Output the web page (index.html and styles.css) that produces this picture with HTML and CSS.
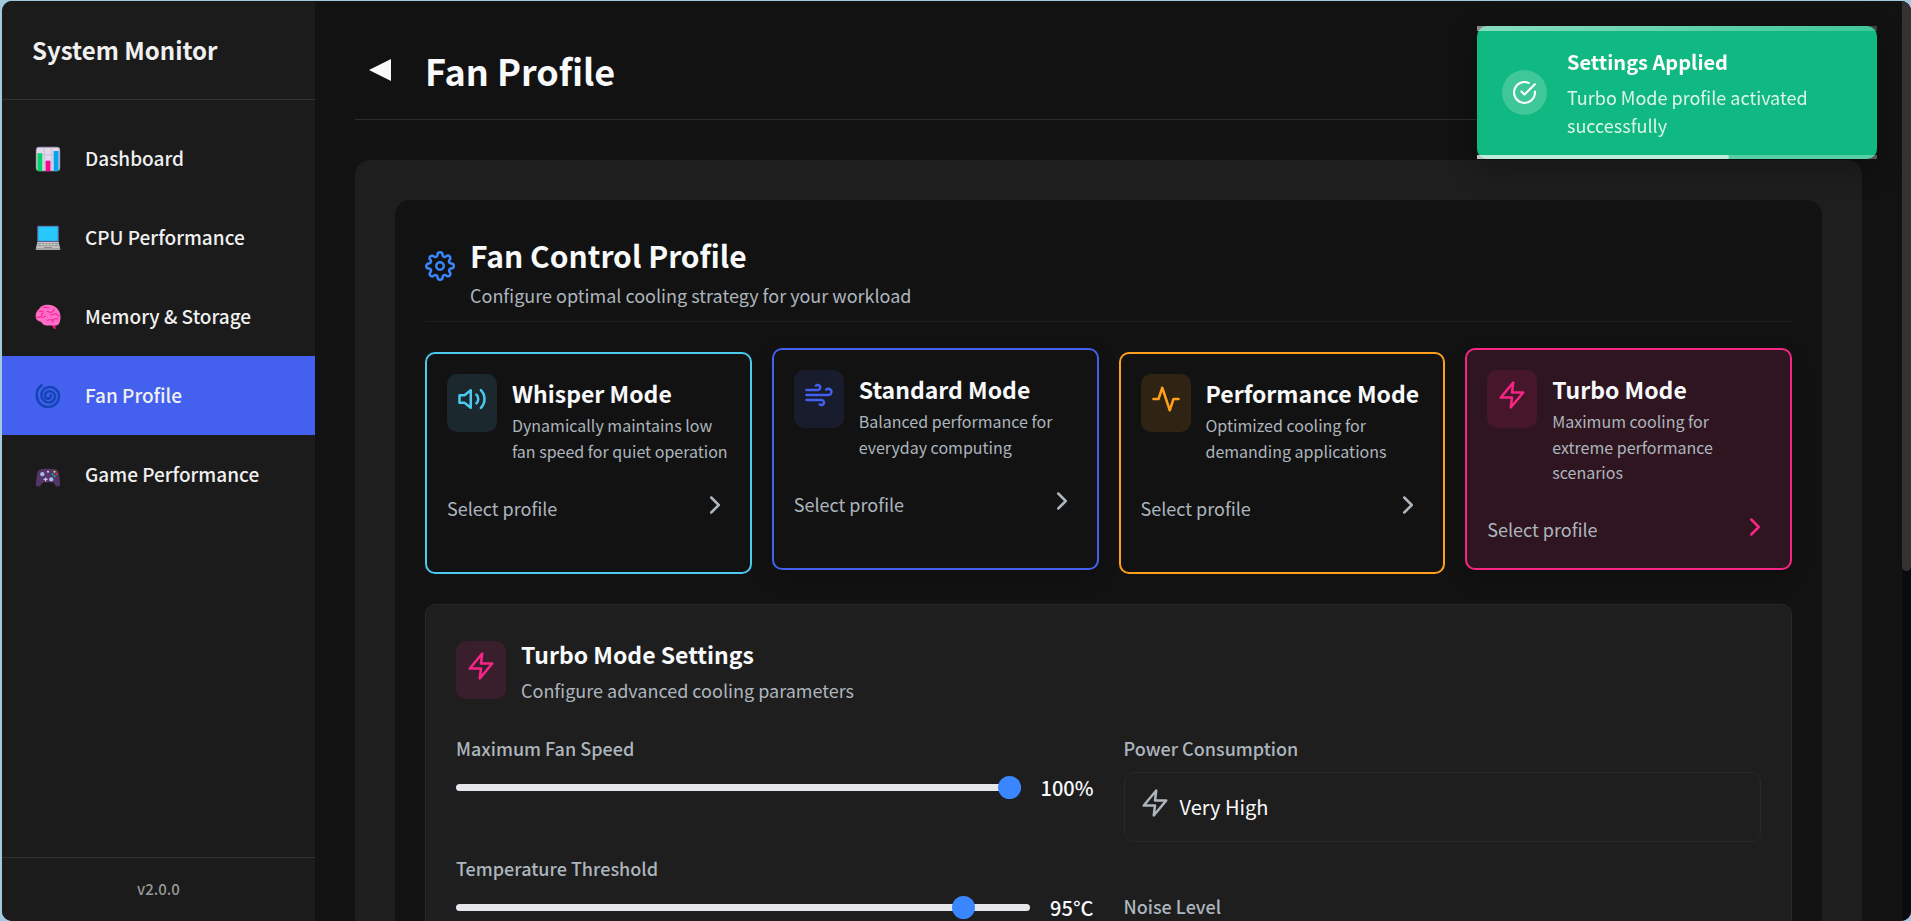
FILE: index.html
```html
<!DOCTYPE html>
<html lang="en">
<head>
<meta charset="utf-8">
<title>System Monitor</title>
<link rel="stylesheet" href="styles.css">
</head>
<body>
<svg class="defs" aria-hidden="true">
  <symbol id="zap" viewBox="0 0 24 24"><polygon points="13 2 3 14 12 14 11 22 21 10 12 10 13 2"/></symbol>
  <symbol id="chevron" viewBox="0 0 24 24"><polyline points="9 18 15 12 9 6"/></symbol>
</svg>
<div class="window">
  <aside class="sidebar">
    <div class="brand">System Monitor</div>
    <nav class="nav">
      <a class="nav-item" href="#dashboard">
        <svg class="emoji" viewBox="0 0 32 32"><rect x="1" y="1" width="30" height="30" rx="4" fill="#998ea4"/><rect x="2" y="2" width="28" height="28" rx="3" fill="#e1d8ec"/><path d="M11.500 2v28M20.500 2v28M2 11h28M2 21h28" stroke="#cdc4d6" stroke-width="1.500"/><path d="M3 9h6v22H5a2 2 0 0 1-2-2z" fill="#00d26a"/><path d="M13 18h6v13h-6z" fill="#f8088e"/><path d="M23 6h6v23a2 2 0 0 1-2 2h-4z" fill="#00a6ed"/></svg>
        <span>Dashboard</span></a>
      <a class="nav-item" href="#cpu">
        <svg class="emoji" viewBox="0 0 32 32"><rect x="2.500" y="1" width="27" height="20" rx="1" fill="#635994"/><rect x="4" y="2" width="24" height="17.500" fill="#26c9fc"/><path d="M3 21h26l2 8H1z" fill="#c3c3c6"/><path d="M4 22h24l1 4H3z" fill="#9b9b9b"/><path d="M4 24h24M8 22v4M12 22v4M16 22v4M20 22v4M24 22v4" stroke="#d3d3d3" stroke-width=".7"/><path d="M11 27h10l.5 2h-11z" fill="#8a8a8a"/><path d="M1 29h30v1.500H1z" fill="#d3d3d3"/></svg>
        <span>CPU Performance</span></a>
      <a class="nav-item" href="#memory">
        <svg class="emoji" viewBox="0 0 32 32"><path d="M21 25l4 0 .5 6-2-.5c-1.500-1-2.500-3-2.500-5.500z" fill="#f8088e"/><path d="M16 1C10 1 7 3 5 6 2 8 .5 12 .8 16c.2 3.500 3 5.500 7 6 1 2.500 3.500 4.500 6.500 4.500H25c3.500 0 5.500-2.500 5.500-5C32 18 31.500 14 30.500 11 29 6 24 1 16 1z" fill="#ff6dc6"/><path d="M10 4c3 1 5-1 7 1M5 9c2-1 3 1 5 0M2 16c3 2 4-2 6 0s3-1 5-1M8 14c0-2 1-3 3-3M15 9c2 1 4 2 6 1s1-3 3-4M19 13c3 2 5-2 7-1s2 3 4 3M15 20c3-2 5 1 8-1s3 0 5-1M23 19c0 2-1 3-2 3" fill="none" stroke="#f8259b" stroke-width="1.300" stroke-linecap="round"/></svg>
        <span>Memory &amp; Storage</span></a>
      <a class="nav-item active" href="#fan" aria-current="page">
        <svg class="emoji" viewBox="0 0 32 32"><path d="M8 3C3 6 1.500 12 2.500 18 4 25.500 10 30 17 29.500c7.500-.5 13-6.500 12.500-14C29 9 23.500 4.500 17.500 5 11.500 5.500 7.500 10 8 15.500c.4 5 4.300 8.500 9 8.500 4.500 0 8-3.500 7.500-7.800-.4-3.700-3.300-6.200-7-6-3.200.2-5.500 2.800-5 5.800.4 2.300 2.300 3.500 4.200 3.200 2-.3 3-2 2.500-4.200" fill="none" stroke="#1345b7" stroke-width="3.200" stroke-linecap="round"/></svg>
        <span>Fan Profile</span></a>
      <a class="nav-item" href="#game">
        <svg class="emoji" viewBox="0 0 32 32"><path d="M8 9c2-1 14-1 16 0 4 .5 5 3 5.500 6L31 26c.5 4-3.500 6-6 2.500L22 25H10l-3 3.500C4.500 32 .5 30 1 26l1.500-11C3 12 4 9.500 8 9z" fill="#533566"/><circle cx="9" cy="15" r="2.600" fill="#aeb8ef"/><circle cx="20" cy="21.500" r="2.600" fill="#aeb8ef"/><path d="M10.500 21.500h5M13 19v5" stroke="#cdc4f0" stroke-width="1.600"/><circle cx="16" cy="12" r="1.300" fill="#e1d8ec"/><circle cx="24" cy="12" r="1.300" fill="#fcd53f"/><circle cx="21.500" cy="15" r="1.300" fill="#00a6ed"/><circle cx="26.500" cy="15" r="1.300" fill="#f8312f"/><circle cx="24" cy="17.500" r="1.300" fill="#00d26a"/></svg>
        <span>Game Performance</span></a>
    </nav>
    <div class="version">v2.0.0</div>
  </aside>

  <main class="main">
    <header class="page-header">
      <button class="back" type="button" aria-label="Back"><svg viewBox="0 0 22 22"><path d="M0 11 22 0v22z" fill="currentColor"/></svg></button>
      <h1>Fan Profile</h1>
    </header>
    <div class="shell">
      <section class="panel">
        <header class="panel-header">
          <svg class="icon blue" viewBox="0 0 24 24"><circle cx="12" cy="12" r="3"/><path d="M19.400 15a1.650 1.650 0 0 0 .33 1.820l.06.06a2 2 0 0 1 0 2.830 2 2 0 0 1-2.830 0l-.06-.06a1.650 1.650 0 0 0-1.820-.33 1.650 1.650 0 0 0-1 1.510V21a2 2 0 0 1-2 2 2 2 0 0 1-2-2v-.09A1.650 1.650 0 0 0 9 19.400a1.650 1.650 0 0 0-1.820.33l-.06.06a2 2 0 0 1-2.830 0 2 2 0 0 1 0-2.830l.06-.06a1.650 1.650 0 0 0 .33-1.820 1.650 1.650 0 0 0-1.510-1H3a2 2 0 0 1-2-2 2 2 0 0 1 2-2h.09A1.650 1.650 0 0 0 4.600 9a1.650 1.650 0 0 0-.33-1.820l-.06-.06a2 2 0 0 1 0-2.830 2 2 0 0 1 2.830 0l.06.06a1.650 1.650 0 0 0 1.820.33H9a1.650 1.650 0 0 0 1-1.510V3a2 2 0 0 1 2-2 2 2 0 0 1 2 2v.09a1.650 1.650 0 0 0 1 1.510 1.650 1.650 0 0 0 1.820-.33l.06-.06a2 2 0 0 1 2.830 0 2 2 0 0 1 0 2.830l-.06.06a1.650 1.650 0 0 0-.33 1.820V9a1.650 1.650 0 0 0 1.510 1H21a2 2 0 0 1 2 2 2 2 0 0 1-2 2h-.09a1.650 1.650 0 0 0-1.510 1z"/></svg>
          <div>
            <h2>Fan Control Profile</h2>
            <p class="sub">Configure optimal cooling strategy for your workload</p>
          </div>
        </header>

        <div class="cards">
          <button class="card whisper" type="button">
            <span class="card-top">
              <span class="icon-box"><svg class="icon" viewBox="0 0 24 24"><polygon points="11 5 6 9 2 9 2 15 6 15 11 19 11 5"/><path d="M19.070 4.930a10 10 0 0 1 0 14.140M15.540 8.460a5 5 0 0 1 0 7.070"/></svg></span>
              <span class="card-text"><span class="title">Whisper Mode</span><span class="desc">Dynamically maintains low fan speed for quiet operation</span></span>
            </span>
            <span class="card-foot"><span>Select profile</span><svg class="icon"><use href="#chevron"/></svg></span>
          </button>
          <button class="card standard raised" type="button">
            <span class="card-top">
              <span class="icon-box"><svg class="icon" viewBox="0 0 24 24"><path d="M9.590 4.590A2 2 0 1 1 11 8H2m10.590 11.410A2 2 0 1 0 14 16H2m15.730-8.270A2.500 2.500 0 1 1 19.500 12H2"/></svg></span>
              <span class="card-text"><span class="title">Standard Mode</span><span class="desc">Balanced performance for everyday computing</span></span>
            </span>
            <span class="card-foot"><span>Select profile</span><svg class="icon"><use href="#chevron"/></svg></span>
          </button>
          <button class="card performance" type="button">
            <span class="card-top">
              <span class="icon-box"><svg class="icon" viewBox="0 0 24 24"><polyline points="22 12 18 12 15 21 9 3 6 12 2 12"/></svg></span>
              <span class="card-text"><span class="title">Performance Mode</span><span class="desc">Optimized cooling for demanding applications</span></span>
            </span>
            <span class="card-foot"><span>Select profile</span><svg class="icon"><use href="#chevron"/></svg></span>
          </button>
          <button class="card turbo raised selected" type="button" aria-pressed="true">
            <span class="card-top">
              <span class="icon-box"><svg class="icon"><use href="#zap"/></svg></span>
              <span class="card-text"><span class="title">Turbo Mode</span><span class="desc">Maximum cooling for extreme performance scenarios</span></span>
            </span>
            <span class="card-foot"><span>Select profile</span><svg class="icon"><use href="#chevron"/></svg></span>
          </button>
        </div>

        <section class="settings">
          <header class="settings-header turbo">
            <span class="icon-box"><svg class="icon"><use href="#zap"/></svg></span>
            <div>
              <h3>Turbo Mode Settings</h3>
              <p class="sub">Configure advanced cooling parameters</p>
            </div>
          </header>
          <div class="settings-grid">
            <div class="column">
              <div class="field">
                <label for="speed">Maximum Fan Speed</label>
                <div class="slider-row"><input id="speed" type="range" min="0" max="100" value="100"><output for="speed">100%</output></div>
              </div>
              <div class="field">
                <label for="temp">Temperature Threshold</label>
                <div class="slider-row"><input id="temp" type="range" min="50" max="100" value="95"><output for="temp">95°C</output></div>
              </div>
            </div>
            <div class="column">
              <div class="field">
                <div class="label">Power Consumption</div>
                <div class="value-box"><svg class="icon"><use href="#zap"/></svg><span>Very High</span></div>
              </div>
              <div class="field">
                <div class="label">Noise Level</div>
              </div>
            </div>
          </div>
        </section>
      </section>
    </div>
  </main>
  <div class="scrollbar" aria-hidden="true"><div class="thumb"></div></div>
</div>

<div class="toast" role="status">
  <span class="toast-icon"><svg viewBox="0 0 24 24"><path d="M22 11.080V12a10 10 0 1 1-5.930-9.140"/><polyline points="22 4 12 14.010 9 11.010"/></svg></span>
  <div>
    <div class="toast-title">Settings Applied</div>
    <p class="toast-text">Turbo Mode profile activated successfully</p>
  </div>
  <div class="toast-progress"><div class="toast-bar"></div></div>
</div>
</body>
</html>
```
FILE: styles.css
```css
* { box-sizing: border-box; margin: 0; padding: 0; }

body {
  height: 100vh;
  overflow: hidden;
  padding: 1px 0 0 2px;
  background: #a3c9de;
  color: #f8f9fa;
  font-family: "Noto Sans CJK SC", "Noto Sans", sans-serif;
  font-size: 18px;
  line-height: 1.6;
}

button, input { font: inherit; color: inherit; }
.defs { display: none; }

.window {
  display: flex;
  height: 100%;
  overflow: hidden;
  border-radius: 10px;
  background: #121212;
}

/* Sidebar */
.sidebar {
  display: flex;
  flex-direction: column;
  flex: 0 0 313px;
  background: #1b1b1b;
}
.brand {
  padding: 28px 30px;
  border-bottom: 1px solid #333;
  font-size: 24px;
  line-height: 42px;
  font-weight: 700;
  color: #f0f0f0;
}
.nav { flex: 1; padding-top: 19px; }
.nav-item {
  display: flex;
  align-items: center;
  gap: 24px;
  height: 79px;
  padding: 0 33px;
  color: #f0f0f0;
  font-size: 19px;
  font-weight: 500;
  text-decoration: none;
}
.nav-item.active { background: #4361ee; }
.emoji { width: 26px; height: 26px; }
.version {
  padding: 18px 0 19px;
  border-top: 1px solid #333;
  text-align: center;
  font-size: 15px;
  line-height: 26px;
  font-weight: 500;
  color: #999;
}

/* Main area */
.main { flex: 1; min-width: 0; overflow: hidden; padding: 40px; }
.page-header {
  display: flex;
  align-items: center;
  gap: 20px;
  margin-bottom: 40px;
  padding-bottom: 20px;
  border-bottom: 1px solid #2c2c2c;
}
.back { width: 50px; height: 50px; border: 0; background: none; }
.back svg { display: block; width: 22px; height: 22px; margin: 0 auto; }
h1 { font-size: 36px; line-height: 58px; font-weight: 700; }

.shell { padding: 40px; border-radius: 15px; background: #1e1e1e; }
.panel { padding: 30px; border-radius: 15px; background: #121212; }
.panel-header {
  display: flex;
  align-items: center;
  gap: 15px;
  margin-bottom: 30px;
  padding-bottom: 11px;
  border-bottom: 1px solid #1e1e1e;
}
h2 { font-size: 30px; line-height: 50px; font-weight: 700; }
h3 { font-size: 23px; line-height: 38px; font-weight: 700; margin-bottom: 2px; }
.sub { line-height: 30px; color: #adb5bd; }

.icon {
  display: block;
  flex: none;
  width: 30px;
  height: 30px;
  margin-bottom: 8px;
  fill: none;
  stroke: currentColor;
  stroke-width: 2;
  stroke-linecap: round;
  stroke-linejoin: round;
}
.blue { color: #3a86ff; }
.icon-box { flex: none; padding: 10px; border-radius: 10px; color: var(--accent); background: var(--tint); }

.cards { display: grid; grid-template-columns: repeat(4, 1fr); gap: 20px; margin-bottom: 30px; }
.card {
  display: flex;
  flex-direction: column;
  min-width: 0;
  padding: 20px;
  border: 2px solid var(--accent);
  border-radius: 10px;
  background: #121212;
  text-align: left;
}
.card.raised { transform: translateY(-4px); box-shadow: 0 8px 20px rgba(0, 0, 0, .2); }
.card.selected { background: #2f1520; }
.card-top { display: flex; align-items: flex-start; gap: 15px; margin-bottom: 26px; }
.card-text { min-width: 0; }
.title { display: block; margin-bottom: 1px; font-size: 23px; line-height: 38px; font-weight: 700; white-space: nowrap; }
.desc { display: block; font-size: 16px; line-height: 1.6; color: #adb5bd; }
.card-foot { display: flex; justify-content: space-between; align-items: center; color: #adb5bd; }
.card-foot .icon { margin-bottom: 6px; }
.selected .card-foot .icon { color: var(--accent); }

.whisper { --accent: #4cc9f0; --tint: #1b282d; }
.standard { --accent: #4361ee; --tint: #191c2d; }
.performance { --accent: #ff9f1c; --tint: #2f2314; }
.turbo { --accent: #f72585; --tint: #46162b; }
.settings-header.turbo { --tint: #391f2b; }

/* Profile settings */
.settings { padding: 30px; border: 1px solid #282828; border-radius: 10px; background: #1e1e1e; }
.settings-header { display: flex; align-items: center; gap: 15px; margin-bottom: 29px; }
.settings-grid { display: grid; grid-template-columns: 1fr 1fr; gap: 30px; }
.field { margin-bottom: 50px; }
label, .label { display: block; margin-bottom: 10px; line-height: 28px; font-weight: 500; color: #adb5bd; }
.slider-row { display: flex; align-items: center; gap: 20px; font-size: 20px; line-height: 32px; font-weight: 500; }
input[type="range"] {
  flex: 1;
  min-width: 0;
  height: 7px;
  appearance: none;
  border-radius: 4px;
  background: #e5e7eb;
}
input[type="range"]::-webkit-slider-thumb {
  appearance: none;
  width: 23px;
  height: 23px;
  border-radius: 50%;
  background: #3a86ff;
}
.value-box {
  display: flex;
  align-items: center;
  gap: 10px;
  padding: 15px;
  border: 1px solid #282828;
  border-radius: 10px;
  font-size: 20px;
}
.value-box .icon { color: #adb5bd; }

.scrollbar { flex: 0 0 9px; background: #0a0b10; }
.thumb { height: 62%; border-radius: 0 0 5px 5px; background: #333; }

/* Notification */
.toast {
  position: fixed;
  top: 26px;
  right: 34px;
  display: flex;
  align-items: center;
  gap: 20px;
  width: 400px;
  padding: 20px 25px;
  border-radius: 10px;
  background: #10b981;
  box-shadow: 0 10px 30px rgba(0, 0, 0, .3);
  color: #fff;
}
.toast::before {
  content: "";
  position: absolute;
  inset: 0 0 auto;
  height: 5px;
  background: linear-gradient(90deg, rgba(255, 255, 255, .5), rgba(255, 255, 255, .2));
}
.toast-icon { flex: none; padding: 10px; border-radius: 50%; background: rgba(255, 255, 255, .2); }
.toast-icon svg {
  display: block;
  width: 25px;
  height: 25px;
  fill: none;
  stroke: currentColor;
  stroke-width: 2;
  stroke-linecap: round;
  stroke-linejoin: round;
}
.toast-title { margin-bottom: 5px; font-size: 20px; line-height: 32px; font-weight: 700; }
.toast-text { line-height: 28px; color: rgba(255, 255, 255, .85); }
.toast-progress { position: absolute; inset: auto 0 0; height: 4px; background: rgba(255, 255, 255, .3); }
.toast-bar { width: 63%; height: 100%; border-radius: 0 4px 4px 0; background: rgba(255, 255, 255, .62); }
```
